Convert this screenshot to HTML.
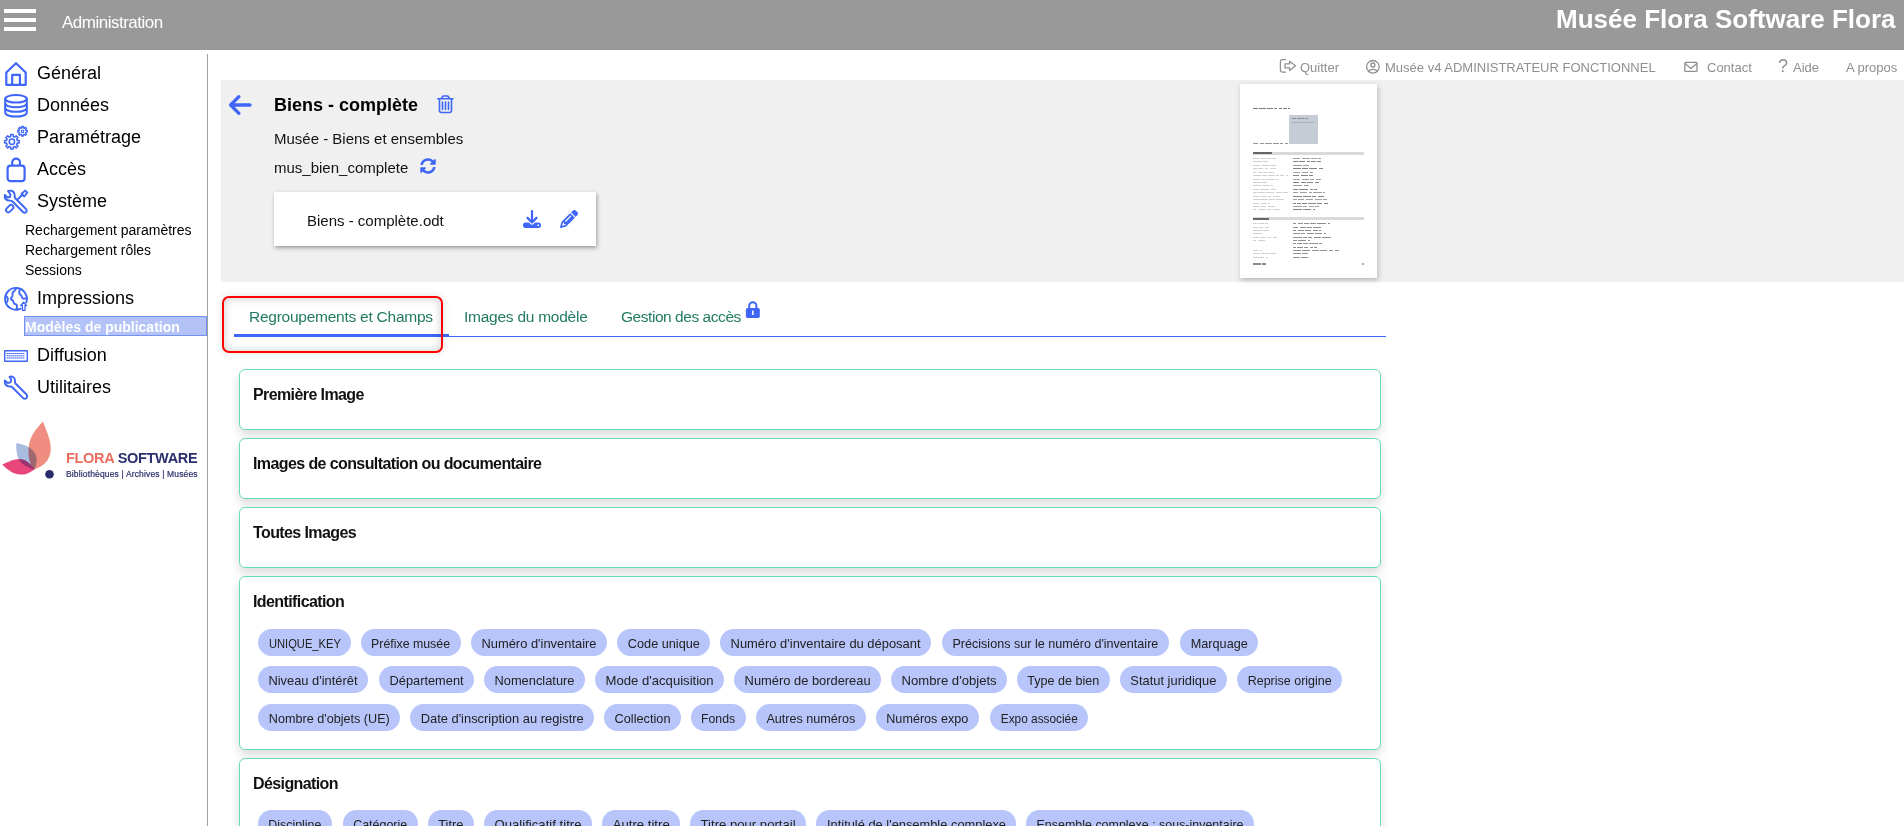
<!DOCTYPE html>
<html><head><meta charset="utf-8">
<style>
*{box-sizing:border-box;margin:0;padding:0}
html,body{width:1904px;height:826px;overflow:hidden;background:#fff;font-family:"Liberation Sans",sans-serif;position:relative}
.abs{position:absolute}
#hdr{left:0;top:0;width:1904px;height:50px;background:#999999}
.hb{position:absolute;left:4px;width:32px;height:4px;background:#fff}
#admin{left:62px;top:13px;font-size:17px;letter-spacing:-0.5px;color:#fff;white-space:nowrap}
#brand{left:1556px;top:4px;font-size:26px;font-weight:bold;color:#fff;white-space:nowrap}
#vline{left:207px;top:54px;width:1px;height:772px;background:#a0a0a0}
.nav{position:absolute;left:37px;font-size:18px;color:#000;white-space:nowrap}
.sub{position:absolute;left:25px;font-size:14px;color:#000;white-space:nowrap}
.tn{position:absolute;top:60px;font-size:13px;color:#8f8f8f;white-space:nowrap}
#grey{left:221px;top:80px;width:1683px;height:202px;background:#f0f0f0}
.t{position:absolute;white-space:nowrap;color:#000}
.panel{position:absolute;left:239px;width:1142px;border:1.5px solid #6adabe;border-radius:6px;background:#fff;box-shadow:0 5px 10px rgba(0,0,0,0.14)}
.panel h3{position:absolute;left:13px;font-size:16px;letter-spacing:-0.6px;font-weight:bold;color:#111;white-space:nowrap}
.chip{position:absolute;height:27px;border-radius:14px;background:#b7c5fa;color:#222;font-size:13px;line-height:29px;text-align:center;white-space:nowrap}
.chip span{display:inline-block;transform-origin:center}
.tab{position:absolute;top:307.5px;font-size:15.5px;letter-spacing:-0.25px;color:#227a62;white-space:nowrap}
</style></head><body>
<div id="hdr" class="abs">
  <div class="hb" style="top:9px"></div>
  <div class="hb" style="top:18px"></div>
  <div class="hb" style="top:27px"></div>
  <div id="admin" class="abs">Administration</div>
  <div id="brand" class="abs">Musée Flora Software Flora</div>
</div>
<div id="vline" class="abs"></div>

<!-- sidebar icons -->
<svg class="abs" style="left:0;top:0" width="208" height="410" viewBox="0 0 208 410" fill="none" stroke="#3f66f6" stroke-linejoin="round" stroke-linecap="round">
  <!-- house -->
  <path d="M6.3 84.8 V72.5 L16 63.2 L25.7 72.5 V84.8 Z" stroke-width="2.2"/>
  <path d="M12.2 84.8 V74.9 H19.9 V84.8" stroke-width="2.2"/>
  <!-- database -->
  <g stroke-width="2">
    <ellipse cx="16" cy="98.8" rx="10.8" ry="3.8"/>
    <path d="M5.2 98.8 V112.8 A10.8 3.8 0 0 0 26.8 112.8 V98.8"/>
    <path d="M5.2 103.4 A10.8 3.8 0 0 0 26.8 103.4"/>
    <path d="M5.2 108 A10.8 3.8 0 0 0 26.8 108"/>
  </g>
  <!-- gears -->
  <path d="M10.60 136.46 L10.60 134.52 L13.20 134.52 L13.20 136.46 L14.76 137.10 L16.13 135.73 L17.97 137.57 L16.60 138.94 L17.24 140.50 L19.18 140.50 L19.18 143.10 L17.24 143.10 L16.60 144.66 L17.97 146.03 L16.13 147.87 L14.76 146.50 L13.20 147.14 L13.20 149.08 L10.60 149.08 L10.60 147.14 L9.04 146.50 L7.67 147.87 L5.83 146.03 L7.20 144.66 L6.56 143.10 L4.62 143.10 L4.62 140.50 L6.56 140.50 L7.20 138.94 L5.83 137.57 L7.67 135.73 L9.04 137.10 Z" stroke-width="1.5"/><circle cx="11.9" cy="141.8" r="2.7" stroke-width="1.5"/><path d="M21.67 127.90 L21.64 126.48 L23.36 126.48 L23.33 127.90 L24.32 128.31 L25.30 127.28 L26.52 128.50 L25.49 129.48 L25.90 130.47 L27.32 130.44 L27.32 132.16 L25.90 132.13 L25.49 133.12 L26.52 134.10 L25.30 135.32 L24.32 134.29 L23.33 134.70 L23.36 136.12 L21.64 136.12 L21.67 134.70 L20.68 134.29 L19.70 135.32 L18.48 134.10 L19.51 133.12 L19.10 132.13 L17.68 132.16 L17.68 130.44 L19.10 130.47 L19.51 129.48 L18.48 128.50 L19.70 127.28 L20.68 128.31 Z" stroke-width="1.3"/><circle cx="22.5" cy="131.3" r="1.3" stroke-width="1.1"/>
  <!-- lock -->
  <path d="M12.2 165 V162.5 A3.9 3.9 0 0 1 20 162.5 V165" stroke-width="2.2"/>
  <rect x="7.6" y="165.6" width="17" height="15.6" rx="3" stroke-width="2.2"/>
  <!-- tools -->
  <g stroke-width="1.9">
    <path d="M8 191 C11 190 14 191 14.5 194 C15 196 14.5 197 15 198 L26 209 C27.5 210.5 26.5 212.8 24.6 212.8 C24 212.8 23.5 212.5 23 212 L12 201 C11 200.3 10 200.8 8.5 200.5 C5.5 200 4.5 197.5 4.8 195 L7.5 197.5 L10 197 L10.5 194.5 Z"/>
    <path d="M18 199 L22.5 194.5 M21.5 193.8 L25.2 190.6 L27.3 192.7 L24.2 196.5 Z"/>
    <rect x="5.45" y="206.3" width="8.5" height="4.6" rx="2.3" transform="rotate(-45 9.7 208.6)"/>
  </g>
  <!-- globe -->
  <g stroke-width="1.9">
    <path d="M20.6 308.7 A10.9 10.9 0 1 1 26.24 302.5"/>
    <path d="M15.8 289 C15.5 291 12.5 291 12.5 293.5 C12.5 295.5 13.5 296.5 11 298 C10.5 299.5 12 300 13 300.5 C13.5 302 13.2 303.5 15 304 C17 304.5 17.5 306 16.8 307.5 L16.5 309.6 M19.8 289.6 C19 291.5 19.2 294 20.8 295 C22 296 21.5 298 23 298.6 C24.5 299 25.8 298 26.8 298 M5.6 296.5 C7 296.6 8 297.5 7.8 299.5 C7.6 301.5 6.8 302.5 6.2 303"/>
    <path d="M23.6 302.3 L20.8 305.5 H22.4 V310.4 H25 V305.5 H26.5 Z" stroke-width="1.3"/>
  </g>
  <!-- keyboard -->
  <g stroke-width="1.4">
    <rect x="4.7" y="350.7" width="22.6" height="10.6"/>
    <path d="M7 353.5 H25 M7 355.8 H25 M7 358 H25" stroke-dasharray="1 1" stroke-width="1"/>
  </g>
  <!-- wrench -->
  <path d="M9.5 376.8 C12.5 376 15 377.5 15 380.5 C15 381.8 14.6 382.5 15.5 383.5 L26.5 394.5 C28 396 27 398.8 24.8 398.8 C24.2 398.8 23.7 398.6 23.2 398.1 L12 387 C11.2 386.3 10.3 386.6 8.8 386.4 C6 386 4.5 383.5 4.8 380.5 L7.7 383 L10.5 382.4 L11.2 379.5 Z" stroke-width="1.9"/>
</svg>

<!-- sidebar -->
<div class="nav" style="top:63px">Général</div>
<div class="nav" style="top:95px">Données</div>
<div class="nav" style="top:127px">Paramétrage</div>
<div class="nav" style="top:159px">Accès</div>
<div class="nav" style="top:191px">Système</div>
<div class="sub" style="top:222px">Rechargement paramètres</div>
<div class="sub" style="top:242px">Rechargement rôles</div>
<div class="sub" style="top:262px">Sessions</div>
<div class="nav" style="top:288px">Impressions</div>
<div class="abs" style="left:24px;top:316px;width:183px;height:20px;background:#b3c3f8;border:1px solid #7492f2"></div>
<div class="sub" style="top:319px;color:#fff;font-weight:bold">Modèles de publication</div>
<div class="nav" style="top:345px">Diffusion</div>
<div class="nav" style="top:377px">Utilitaires</div>

<!-- logo -->
<svg class="abs" style="left:0;top:415px" width="60" height="70" viewBox="0 415 60 70">
  <path d="M43 421.5 C36 429 29 437 28.5 449 C28 458 30 465 34.5 469.5 C44 466 50.5 460 50.8 449 C51 440 46 430 43 421.5 Z" fill="#ef8e80"/>
  <path d="M16.3 443.1 C16 452 17 460 24 465 C28 467.5 31 468.5 34.5 469.4 C37.5 463 37.5 456 33.5 451 C29 446 22 444.5 16.3 443.1 Z" fill="#aabbe0" style="mix-blend-mode:multiply"/>
  <path d="M2.3 464.4 C8 462 14 459 19 459 C26 459 31 464 34.5 469.4 C29 473 25 474.8 21 474.6 C12 474 7 469 2.3 464.4 Z" fill="#e8457a" style="mix-blend-mode:multiply"/>
  <circle cx="49.5" cy="474.2" r="4.3" fill="#2b2c6c"/>
</svg>
<div class="abs" style="left:66px;top:450px;font-size:14.5px;font-weight:bold;white-space:nowrap;letter-spacing:-0.3px"><span style="color:#ec6e61">FLORA</span> <span style="color:#2b2f6e">SOFTWARE</span></div>
<div class="abs" style="left:66px;top:469px;font-size:8.5px;letter-spacing:0.15px;color:#2b2e6a;-webkit-text-stroke:0.2px #2b2e6a;white-space:nowrap">Bibliothèques | Archives | Musées</div>

<!-- top nav -->
<svg class="abs" style="left:1270px;top:52px" width="440" height="28" viewBox="1270 52 440 28" fill="none" stroke="#8f8f8f" stroke-width="1.3" stroke-linejoin="round" stroke-linecap="round">
  <path d="M1285.6 59.6 H1282.2 A1.8 1.8 0 0 0 1280.4 61.4 V70.3 A1.8 1.8 0 0 0 1282.2 72.1 H1285.6"/>
  <path d="M1285 63.8 H1289.6 V61.2 L1295.5 65.8 L1289.6 70.4 V67.9 H1285 Z"/>
  <circle cx="1372.9" cy="66.8" r="6.3"/>
  <circle cx="1372.9" cy="65" r="2"/>
  <path d="M1368.6 71.6 C1369.2 69.8 1370.2 69.3 1372.9 69.3 C1375.6 69.3 1376.6 69.8 1377.2 71.6"/>
  <rect x="1684.8" y="62.4" width="12.2" height="9" rx="1"/>
  <path d="M1685 63.6 L1690.9 68.6 L1696.8 63.6"/>
</svg>
<div class="tn" style="left:1300px">Quitter</div>
<div class="tn" style="left:1385px">Musée v4 ADMINISTRATEUR FONCTIONNEL</div>
<div class="tn" style="left:1707px">Contact</div>
<div class="tn" style="left:1778px;font-size:18px;top:56px">?</div>
<div class="tn" style="left:1793px">Aide</div>
<div class="tn" style="left:1846px">A propos</div>

<div id="grey" class="abs"></div>
<svg class="abs" style="left:220px;top:85px" width="240" height="100" viewBox="220 85 240 100" fill="none" stroke="#4066f7" stroke-linecap="round" stroke-linejoin="round">
  <path d="M238.9 96.7 L230.6 105 L238.9 113.3 M230.8 105 H250" stroke-width="3.3"/>
  <path d="M437.8 98.8 H453 M441.5 98.5 L443 96 H447.8 L449.3 98.5 M439.5 99 V110.5 A2 2 0 0 0 441.5 112.5 H449.5 A2 2 0 0 0 451.5 110.5 V99 M442.5 102 V109.5 M445.5 102 V109.5 M448.5 102 V109.5" stroke-width="1.6"/>
</svg>
<div class="t" style="left:274px;top:95px;font-size:18px;font-weight:bold">Biens - complète</div>
<div class="t" style="left:274px;top:130px;font-size:15px;color:#111">Musée - Biens et ensembles</div>
<div class="t" style="left:274px;top:159px;font-size:15px;color:#111">mus_bien_complete</div>
<svg class="abs" style="left:420px;top:158px" width="16" height="16" viewBox="0 0 512 512"><path fill="#4066f7" d="M370.72 133.28C339.458 104.008 298.888 87.962 255.848 88c-77.458.068-144.328 53.178-162.791 126.85-1.344 5.363-6.122 9.15-11.651 9.15H24.103c-7.498 0-13.194-6.807-11.807-14.176C33.933 94.924 134.813 8 256 8c66.448 0 126.791 26.136 171.315 68.685L463.03 40.97C478.149 25.851 504 36.559 504 57.941V192c0 13.255-10.745 24-24 24H345.941c-21.382 0-32.090-25.851-16.971-40.971l41.750-41.749zM32 296h134.059c21.382 0 32.090 25.851 16.971 40.971l-41.750 41.750c31.262 29.273 71.835 45.319 114.876 45.280 77.418-.07 144.315-53.144 162.787-126.849 1.344-5.363 6.122-9.150 11.651-9.150h57.304c7.498 0 13.194 6.807 11.807 14.176C478.067 417.076 377.187 504 256 504c-66.448 0-126.791-26.136-171.315-68.685L48.970 471.030C33.851 486.149 8 475.441 8 454.059V320c0-13.255 10.745-24 24-24z"/></svg>
<div class="abs" style="left:274px;top:192px;width:322px;height:54px;background:#fff;box-shadow:1px 2px 4px rgba(0,0,0,0.35)"></div>
<div class="t" style="left:307px;top:212px;font-size:15px;color:#111">Biens - complète.odt</div>
<svg class="abs" style="left:523px;top:210px" width="18" height="18" viewBox="0 0 512 512"><path fill="#4066f7" d="M288 32c0-17.700-14.300-32-32-32s-32 14.300-32 32V274.700l-73.400-73.400c-12.500-12.500-32.800-12.500-45.300 0s-12.500 32.800 0 45.300l128 128c12.500 12.500 32.800 12.500 45.300 0l128-128c12.500-12.500 12.500-32.800 0-45.300s-32.800-12.500-45.300 0L288 274.700V32zM64 352c-35.300 0-64 28.700-64 64v32c0 35.300 28.700 64 64 64H448c35.300 0 64-28.700 64-64V416c0-35.300-28.700-64-64-64H346.500l-45.300 45.300c-25 25-65.500 25-90.500 0L165.500 352H64zm368 56a24 24 0 1 1 0 48 24 24 0 1 1 0-48z"/></svg>
<svg class="abs" style="left:560px;top:210px" width="18" height="18" viewBox="0 0 512 512"><path fill="#4066f7" d="M410.300 231l11.300-11.300-33.900-33.900-62.100-62.100L291.700 89.800l-11.300 11.300-22.600 22.600L58.600 322.900c-10.400 10.400-18 23.300-22.200 37.400L1 480.700c-2.500 8.400-.2 17.500 6.100 23.700s15.300 8.500 23.700 6.100l120.300-35.400c14.100-4.200 27-11.800 37.400-22.200L387.700 253.700 410.300 231zM160 399.400l-9.100 22.700c-4 3.100-8.500 5.400-13.300 6.900L59.400 452l23-78.100c1.400-4.900 3.800-9.400 6.900-13.300l22.700-9.100v32c0 8.800 7.200 16 16 16h32zM362.700 18.700L348.300 33.200 325.700 55.800 314.300 67.100l33.900 33.900 62.100 62.100 33.900 33.900 11.300-11.300 22.600-22.600 14.500-14.500c25-25 25-65.500 0-90.500L453.300 18.700c-25-25-65.500-25-90.500 0zm-47.400 168l-144 144c-6.200 6.200-16.400 6.200-22.600 0s-6.200-16.400 0-22.600l144-144c6.200-6.200 16.400-6.200 22.600 0s6.200 16.400 0 22.600z"/></svg>
<div class="abs" style="left:1240px;top:84px;width:137px;height:194px;background:#fff;box-shadow:1px 2px 5px rgba(0,0,0,0.25)"></div>
<div class="abs" style="left:1253.0px;top:107.8px;width:4.9px;height:1.4px;background:#7a7a7a"></div>
<div class="abs" style="left:1258.9px;top:107.8px;width:6.9px;height:1.4px;background:#7a7a7a"></div>
<div class="abs" style="left:1266.7px;top:107.8px;width:6.2px;height:1.4px;background:#7a7a7a"></div>
<div class="abs" style="left:1274.1px;top:107.8px;width:3.3px;height:1.4px;background:#7a7a7a"></div>
<div class="abs" style="left:1278.7px;top:107.8px;width:3.2px;height:1.4px;background:#7a7a7a"></div>
<div class="abs" style="left:1283.2px;top:107.8px;width:3.4px;height:1.4px;background:#7a7a7a"></div>
<div class="abs" style="left:1287.5px;top:107.8px;width:2.5px;height:1.4px;background:#7a7a7a"></div>
<div class="abs" style="left:1289.0px;top:115.0px;width:29.0px;height:29px;background:#c6ccd6"></div>
<div class="abs" style="left:1292.0px;top:118.3px;width:3.7px;height:0.9px;background:#8a90a0"></div>
<div class="abs" style="left:1296.8px;top:118.3px;width:6.8px;height:0.9px;background:#8a90a0"></div>
<div class="abs" style="left:1305.3px;top:118.3px;width:2.7px;height:0.9px;background:#8a90a0"></div>
<div class="abs" style="left:1292.0px;top:121.5px;width:8.9px;height:0.7px;background:#a6acb8"></div>
<div class="abs" style="left:1301.7px;top:121.5px;width:8.2px;height:0.7px;background:#a6acb8"></div>
<div class="abs" style="left:1310.9px;top:121.5px;width:3.1px;height:0.7px;background:#a6acb8"></div>
<div class="abs" style="left:1253.0px;top:142.8px;width:4.9px;height:1.1px;background:#999"></div>
<div class="abs" style="left:1259.5px;top:142.8px;width:4.1px;height:1.1px;background:#999"></div>
<div class="abs" style="left:1264.9px;top:142.8px;width:6.8px;height:1.1px;background:#999"></div>
<div class="abs" style="left:1272.9px;top:142.8px;width:6.3px;height:1.1px;background:#999"></div>
<div class="abs" style="left:1280.1px;top:142.8px;width:3.4px;height:1.1px;background:#999"></div>
<div class="abs" style="left:1284.5px;top:142.8px;width:3.5px;height:1.1px;background:#999"></div>
<div class="abs" style="left:1253.0px;top:151.5px;width:111.0px;height:3.3px;background:#d9d9d9"></div>
<div class="abs" style="left:1253.0px;top:152.0px;width:19.0px;height:2.2px;background:#666"></div>
<div class="abs" style="left:1253.0px;top:158.0px;width:5.8px;height:0.9px;background:#d0d0d0"></div>
<div class="abs" style="left:1260.5px;top:158.0px;width:5.2px;height:0.9px;background:#d0d0d0"></div>
<div class="abs" style="left:1266.7px;top:158.0px;width:4.1px;height:0.9px;background:#d0d0d0"></div>
<div class="abs" style="left:1272.4px;top:158.0px;width:3.5px;height:0.9px;background:#d0d0d0"></div>
<div class="abs" style="left:1293.0px;top:158.0px;width:7.4px;height:1.0px;background:#a0a0a0"></div>
<div class="abs" style="left:1301.5px;top:158.0px;width:8.9px;height:1.0px;background:#a0a0a0"></div>
<div class="abs" style="left:1311.3px;top:158.0px;width:5.5px;height:1.0px;background:#a0a0a0"></div>
<div class="abs" style="left:1318.3px;top:158.0px;width:2.7px;height:1.0px;background:#a0a0a0"></div>
<div class="abs" style="left:1253.0px;top:161.4px;width:8.8px;height:0.9px;background:#d0d0d0"></div>
<div class="abs" style="left:1262.6px;top:161.4px;width:5.4px;height:0.9px;background:#d0d0d0"></div>
<div class="abs" style="left:1293.0px;top:161.4px;width:5.0px;height:1.0px;background:#858585"></div>
<div class="abs" style="left:1299.2px;top:161.4px;width:6.0px;height:1.0px;background:#858585"></div>
<div class="abs" style="left:1306.8px;top:161.4px;width:3.4px;height:1.0px;background:#858585"></div>
<div class="abs" style="left:1311.1px;top:161.4px;width:4.6px;height:1.0px;background:#858585"></div>
<div class="abs" style="left:1317.2px;top:161.4px;width:3.4px;height:1.0px;background:#858585"></div>
<div class="abs" style="left:1253.0px;top:164.8px;width:6.9px;height:0.9px;background:#d0d0d0"></div>
<div class="abs" style="left:1261.7px;top:164.8px;width:7.9px;height:0.9px;background:#d0d0d0"></div>
<div class="abs" style="left:1270.7px;top:164.8px;width:5.3px;height:0.9px;background:#d0d0d0"></div>
<div class="abs" style="left:1293.0px;top:164.8px;width:8.6px;height:1.0px;background:#a0a0a0"></div>
<div class="abs" style="left:1302.8px;top:164.8px;width:6.7px;height:1.0px;background:#a0a0a0"></div>
<div class="abs" style="left:1253.0px;top:168.3px;width:3.8px;height:0.9px;background:#d0d0d0"></div>
<div class="abs" style="left:1257.8px;top:168.3px;width:5.3px;height:0.9px;background:#d0d0d0"></div>
<div class="abs" style="left:1264.8px;top:168.3px;width:3.5px;height:0.9px;background:#d0d0d0"></div>
<div class="abs" style="left:1269.6px;top:168.3px;width:6.3px;height:0.9px;background:#d0d0d0"></div>
<div class="abs" style="left:1293.0px;top:168.3px;width:8.2px;height:1.0px;background:#858585"></div>
<div class="abs" style="left:1302.3px;top:168.3px;width:5.5px;height:1.0px;background:#858585"></div>
<div class="abs" style="left:1308.9px;top:168.3px;width:8.3px;height:1.0px;background:#858585"></div>
<div class="abs" style="left:1319.0px;top:168.3px;width:3.9px;height:1.0px;background:#858585"></div>
<div class="abs" style="left:1253.0px;top:171.7px;width:3.1px;height:0.9px;background:#d0d0d0"></div>
<div class="abs" style="left:1257.7px;top:171.7px;width:4.1px;height:0.9px;background:#d0d0d0"></div>
<div class="abs" style="left:1262.9px;top:171.7px;width:3.9px;height:0.9px;background:#d0d0d0"></div>
<div class="abs" style="left:1268.1px;top:171.7px;width:5.9px;height:0.9px;background:#d0d0d0"></div>
<div class="abs" style="left:1293.0px;top:171.7px;width:7.1px;height:1.0px;background:#a0a0a0"></div>
<div class="abs" style="left:1301.5px;top:171.7px;width:6.7px;height:1.0px;background:#a0a0a0"></div>
<div class="abs" style="left:1309.6px;top:171.7px;width:3.3px;height:1.0px;background:#a0a0a0"></div>
<div class="abs" style="left:1253.0px;top:175.1px;width:7.8px;height:0.9px;background:#d0d0d0"></div>
<div class="abs" style="left:1262.0px;top:175.1px;width:5.4px;height:0.9px;background:#d0d0d0"></div>
<div class="abs" style="left:1268.3px;top:175.1px;width:6.8px;height:0.9px;background:#d0d0d0"></div>
<div class="abs" style="left:1275.9px;top:175.1px;width:3.4px;height:0.9px;background:#d0d0d0"></div>
<div class="abs" style="left:1280.4px;top:175.1px;width:4.0px;height:0.9px;background:#d0d0d0"></div>
<div class="abs" style="left:1285.5px;top:175.1px;width:2.5px;height:0.9px;background:#d0d0d0"></div>
<div class="abs" style="left:1293.0px;top:175.1px;width:6.2px;height:1.0px;background:#858585"></div>
<div class="abs" style="left:1301.0px;top:175.1px;width:6.7px;height:1.0px;background:#858585"></div>
<div class="abs" style="left:1308.5px;top:175.1px;width:4.2px;height:1.0px;background:#858585"></div>
<div class="abs" style="left:1253.0px;top:178.5px;width:6.6px;height:0.9px;background:#d0d0d0"></div>
<div class="abs" style="left:1260.9px;top:178.5px;width:3.7px;height:0.9px;background:#d0d0d0"></div>
<div class="abs" style="left:1265.9px;top:178.5px;width:8.9px;height:0.9px;background:#d0d0d0"></div>
<div class="abs" style="left:1276.0px;top:178.5px;width:2.0px;height:0.9px;background:#d0d0d0"></div>
<div class="abs" style="left:1293.0px;top:178.5px;width:7.4px;height:1.0px;background:#a0a0a0"></div>
<div class="abs" style="left:1301.7px;top:178.5px;width:7.2px;height:1.0px;background:#a0a0a0"></div>
<div class="abs" style="left:1310.2px;top:178.5px;width:4.2px;height:1.0px;background:#a0a0a0"></div>
<div class="abs" style="left:1316.2px;top:178.5px;width:4.8px;height:1.0px;background:#a0a0a0"></div>
<div class="abs" style="left:1253.0px;top:181.9px;width:7.5px;height:0.9px;background:#d0d0d0"></div>
<div class="abs" style="left:1261.6px;top:181.9px;width:5.4px;height:0.9px;background:#d0d0d0"></div>
<div class="abs" style="left:1293.0px;top:181.9px;width:6.1px;height:1.0px;background:#858585"></div>
<div class="abs" style="left:1300.8px;top:181.9px;width:5.1px;height:1.0px;background:#858585"></div>
<div class="abs" style="left:1307.0px;top:181.9px;width:6.2px;height:1.0px;background:#858585"></div>
<div class="abs" style="left:1314.5px;top:181.9px;width:4.5px;height:1.0px;background:#858585"></div>
<div class="abs" style="left:1253.0px;top:185.4px;width:7.8px;height:0.9px;background:#d0d0d0"></div>
<div class="abs" style="left:1262.5px;top:185.4px;width:7.4px;height:0.9px;background:#d0d0d0"></div>
<div class="abs" style="left:1270.9px;top:185.4px;width:2.1px;height:0.9px;background:#d0d0d0"></div>
<div class="abs" style="left:1293.0px;top:185.4px;width:8.9px;height:1.0px;background:#a0a0a0"></div>
<div class="abs" style="left:1303.5px;top:185.4px;width:5.8px;height:1.0px;background:#a0a0a0"></div>
<div class="abs" style="left:1253.0px;top:188.8px;width:5.7px;height:0.9px;background:#d0d0d0"></div>
<div class="abs" style="left:1260.4px;top:188.8px;width:8.9px;height:0.9px;background:#d0d0d0"></div>
<div class="abs" style="left:1271.1px;top:188.8px;width:5.2px;height:0.9px;background:#d0d0d0"></div>
<div class="abs" style="left:1293.0px;top:188.8px;width:5.0px;height:1.0px;background:#858585"></div>
<div class="abs" style="left:1299.3px;top:188.8px;width:8.9px;height:1.0px;background:#858585"></div>
<div class="abs" style="left:1309.6px;top:188.8px;width:3.0px;height:1.0px;background:#858585"></div>
<div class="abs" style="left:1314.4px;top:188.8px;width:2.6px;height:1.0px;background:#858585"></div>
<div class="abs" style="left:1253.0px;top:192.2px;width:3.7px;height:0.9px;background:#d0d0d0"></div>
<div class="abs" style="left:1257.9px;top:192.2px;width:7.3px;height:0.9px;background:#d0d0d0"></div>
<div class="abs" style="left:1266.2px;top:192.2px;width:8.3px;height:0.9px;background:#d0d0d0"></div>
<div class="abs" style="left:1275.7px;top:192.2px;width:6.8px;height:0.9px;background:#d0d0d0"></div>
<div class="abs" style="left:1283.4px;top:192.2px;width:4.6px;height:0.9px;background:#d0d0d0"></div>
<div class="abs" style="left:1293.0px;top:192.2px;width:5.4px;height:1.0px;background:#a0a0a0"></div>
<div class="abs" style="left:1300.2px;top:192.2px;width:7.3px;height:1.0px;background:#a0a0a0"></div>
<div class="abs" style="left:1308.5px;top:192.2px;width:3.8px;height:1.0px;background:#a0a0a0"></div>
<div class="abs" style="left:1313.2px;top:192.2px;width:8.4px;height:1.0px;background:#a0a0a0"></div>
<div class="abs" style="left:1323.2px;top:192.2px;width:1.8px;height:1.0px;background:#a0a0a0"></div>
<div class="abs" style="left:1253.0px;top:195.6px;width:6.9px;height:0.9px;background:#d0d0d0"></div>
<div class="abs" style="left:1261.1px;top:195.6px;width:6.3px;height:0.9px;background:#d0d0d0"></div>
<div class="abs" style="left:1268.3px;top:195.6px;width:3.1px;height:0.9px;background:#d0d0d0"></div>
<div class="abs" style="left:1273.2px;top:195.6px;width:6.9px;height:0.9px;background:#d0d0d0"></div>
<div class="abs" style="left:1293.0px;top:195.6px;width:8.9px;height:1.0px;background:#858585"></div>
<div class="abs" style="left:1302.9px;top:195.6px;width:8.2px;height:1.0px;background:#858585"></div>
<div class="abs" style="left:1312.0px;top:195.6px;width:4.3px;height:1.0px;background:#858585"></div>
<div class="abs" style="left:1317.6px;top:195.6px;width:6.4px;height:1.0px;background:#858585"></div>
<div class="abs" style="left:1253.0px;top:199.0px;width:5.5px;height:0.9px;background:#d0d0d0"></div>
<div class="abs" style="left:1259.4px;top:199.0px;width:8.5px;height:0.9px;background:#d0d0d0"></div>
<div class="abs" style="left:1269.1px;top:199.0px;width:5.7px;height:0.9px;background:#d0d0d0"></div>
<div class="abs" style="left:1276.2px;top:199.0px;width:7.8px;height:0.9px;background:#d0d0d0"></div>
<div class="abs" style="left:1293.0px;top:199.0px;width:3.8px;height:1.0px;background:#a0a0a0"></div>
<div class="abs" style="left:1297.7px;top:199.0px;width:6.1px;height:1.0px;background:#a0a0a0"></div>
<div class="abs" style="left:1305.5px;top:199.0px;width:7.7px;height:1.0px;background:#a0a0a0"></div>
<div class="abs" style="left:1314.5px;top:199.0px;width:7.7px;height:1.0px;background:#a0a0a0"></div>
<div class="abs" style="left:1323.1px;top:199.0px;width:3.8px;height:1.0px;background:#a0a0a0"></div>
<div class="abs" style="left:1253.0px;top:202.5px;width:6.3px;height:0.9px;background:#d0d0d0"></div>
<div class="abs" style="left:1260.5px;top:202.5px;width:6.1px;height:0.9px;background:#d0d0d0"></div>
<div class="abs" style="left:1267.9px;top:202.5px;width:2.1px;height:0.9px;background:#d0d0d0"></div>
<div class="abs" style="left:1293.0px;top:202.5px;width:3.3px;height:1.0px;background:#858585"></div>
<div class="abs" style="left:1297.3px;top:202.5px;width:3.3px;height:1.0px;background:#858585"></div>
<div class="abs" style="left:1301.5px;top:202.5px;width:5.7px;height:1.0px;background:#858585"></div>
<div class="abs" style="left:1308.0px;top:202.5px;width:8.4px;height:1.0px;background:#858585"></div>
<div class="abs" style="left:1317.3px;top:202.5px;width:5.0px;height:1.0px;background:#858585"></div>
<div class="abs" style="left:1324.0px;top:202.5px;width:4.0px;height:1.0px;background:#858585"></div>
<div class="abs" style="left:1253.0px;top:205.9px;width:5.7px;height:0.9px;background:#d0d0d0"></div>
<div class="abs" style="left:1260.0px;top:205.9px;width:5.9px;height:0.9px;background:#d0d0d0"></div>
<div class="abs" style="left:1267.7px;top:205.9px;width:7.2px;height:0.9px;background:#d0d0d0"></div>
<div class="abs" style="left:1293.0px;top:205.9px;width:8.5px;height:1.0px;background:#a0a0a0"></div>
<div class="abs" style="left:1303.2px;top:205.9px;width:4.2px;height:1.0px;background:#a0a0a0"></div>
<div class="abs" style="left:1308.7px;top:205.9px;width:5.5px;height:1.0px;background:#a0a0a0"></div>
<div class="abs" style="left:1315.4px;top:205.9px;width:3.6px;height:1.0px;background:#a0a0a0"></div>
<div class="abs" style="left:1253.0px;top:209.3px;width:3.4px;height:0.9px;background:#d0d0d0"></div>
<div class="abs" style="left:1257.9px;top:209.3px;width:7.7px;height:0.9px;background:#d0d0d0"></div>
<div class="abs" style="left:1267.3px;top:209.3px;width:3.9px;height:0.9px;background:#d0d0d0"></div>
<div class="abs" style="left:1272.8px;top:209.3px;width:7.0px;height:0.9px;background:#d0d0d0"></div>
<div class="abs" style="left:1293.0px;top:209.3px;width:8.8px;height:1.0px;background:#858585"></div>
<div class="abs" style="left:1302.8px;top:209.3px;width:8.7px;height:1.0px;background:#858585"></div>
<div class="abs" style="left:1312.7px;top:209.3px;width:2.3px;height:1.0px;background:#858585"></div>
<div class="abs" style="left:1253.0px;top:217.0px;width:111.0px;height:3.3px;background:#d9d9d9"></div>
<div class="abs" style="left:1253.0px;top:217.5px;width:16.0px;height:2.2px;background:#666"></div>
<div class="abs" style="left:1253.0px;top:223.3px;width:4.0px;height:0.9px;background:#d0d0d0"></div>
<div class="abs" style="left:1258.2px;top:223.3px;width:6.1px;height:0.9px;background:#d0d0d0"></div>
<div class="abs" style="left:1265.4px;top:223.3px;width:2.6px;height:0.9px;background:#d0d0d0"></div>
<div class="abs" style="left:1293.0px;top:223.3px;width:3.1px;height:1.0px;background:#8f8f8f"></div>
<div class="abs" style="left:1297.5px;top:223.3px;width:5.6px;height:1.0px;background:#8f8f8f"></div>
<div class="abs" style="left:1303.9px;top:223.3px;width:5.0px;height:1.0px;background:#8f8f8f"></div>
<div class="abs" style="left:1310.3px;top:223.3px;width:6.1px;height:1.0px;background:#8f8f8f"></div>
<div class="abs" style="left:1317.3px;top:223.3px;width:8.9px;height:1.0px;background:#8f8f8f"></div>
<div class="abs" style="left:1327.8px;top:223.3px;width:2.2px;height:1.0px;background:#8f8f8f"></div>
<div class="abs" style="left:1253.0px;top:226.7px;width:4.6px;height:0.9px;background:#d0d0d0"></div>
<div class="abs" style="left:1259.3px;top:226.7px;width:4.1px;height:0.9px;background:#d0d0d0"></div>
<div class="abs" style="left:1265.0px;top:226.7px;width:4.0px;height:0.9px;background:#d0d0d0"></div>
<div class="abs" style="left:1293.0px;top:226.7px;width:5.4px;height:1.0px;background:#8f8f8f"></div>
<div class="abs" style="left:1299.8px;top:226.7px;width:6.1px;height:1.0px;background:#8f8f8f"></div>
<div class="abs" style="left:1307.2px;top:226.7px;width:5.0px;height:1.0px;background:#8f8f8f"></div>
<div class="abs" style="left:1313.2px;top:226.7px;width:7.8px;height:1.0px;background:#8f8f8f"></div>
<div class="abs" style="left:1253.0px;top:230.0px;width:8.6px;height:0.9px;background:#d0d0d0"></div>
<div class="abs" style="left:1263.1px;top:230.0px;width:5.9px;height:0.9px;background:#d0d0d0"></div>
<div class="abs" style="left:1293.0px;top:230.0px;width:3.4px;height:1.0px;background:#8f8f8f"></div>
<div class="abs" style="left:1298.1px;top:230.0px;width:5.7px;height:1.0px;background:#8f8f8f"></div>
<div class="abs" style="left:1304.9px;top:230.0px;width:6.3px;height:1.0px;background:#8f8f8f"></div>
<div class="abs" style="left:1313.0px;top:230.0px;width:4.6px;height:1.0px;background:#8f8f8f"></div>
<div class="abs" style="left:1318.5px;top:230.0px;width:2.5px;height:1.0px;background:#8f8f8f"></div>
<div class="abs" style="left:1253.0px;top:233.3px;width:8.8px;height:0.9px;background:#d0d0d0"></div>
<div class="abs" style="left:1293.0px;top:233.3px;width:6.8px;height:1.0px;background:#8f8f8f"></div>
<div class="abs" style="left:1301.1px;top:233.3px;width:4.2px;height:1.0px;background:#8f8f8f"></div>
<div class="abs" style="left:1306.6px;top:233.3px;width:7.0px;height:1.0px;background:#8f8f8f"></div>
<div class="abs" style="left:1314.7px;top:233.3px;width:7.8px;height:1.0px;background:#8f8f8f"></div>
<div class="abs" style="left:1324.3px;top:233.3px;width:1.7px;height:1.0px;background:#8f8f8f"></div>
<div class="abs" style="left:1253.0px;top:236.7px;width:6.3px;height:0.9px;background:#d0d0d0"></div>
<div class="abs" style="left:1260.3px;top:236.7px;width:5.8px;height:0.9px;background:#d0d0d0"></div>
<div class="abs" style="left:1267.9px;top:236.7px;width:3.6px;height:0.9px;background:#d0d0d0"></div>
<div class="abs" style="left:1273.1px;top:236.7px;width:3.9px;height:0.9px;background:#d0d0d0"></div>
<div class="abs" style="left:1293.0px;top:236.7px;width:8.8px;height:1.0px;background:#8f8f8f"></div>
<div class="abs" style="left:1302.9px;top:236.7px;width:4.3px;height:1.0px;background:#8f8f8f"></div>
<div class="abs" style="left:1308.3px;top:236.7px;width:4.2px;height:1.0px;background:#8f8f8f"></div>
<div class="abs" style="left:1314.1px;top:236.7px;width:7.4px;height:1.0px;background:#8f8f8f"></div>
<div class="abs" style="left:1322.4px;top:236.7px;width:8.9px;height:1.0px;background:#8f8f8f"></div>
<div class="abs" style="left:1253.0px;top:240.0px;width:3.1px;height:0.9px;background:#d0d0d0"></div>
<div class="abs" style="left:1257.5px;top:240.0px;width:7.5px;height:0.9px;background:#d0d0d0"></div>
<div class="abs" style="left:1293.0px;top:240.0px;width:3.5px;height:1.0px;background:#8f8f8f"></div>
<div class="abs" style="left:1298.1px;top:240.0px;width:8.2px;height:1.0px;background:#8f8f8f"></div>
<div class="abs" style="left:1307.8px;top:240.0px;width:2.2px;height:1.0px;background:#8f8f8f"></div>
<div class="abs" style="left:1293.0px;top:243.4px;width:3.3px;height:1.0px;background:#8f8f8f"></div>
<div class="abs" style="left:1297.3px;top:243.4px;width:4.6px;height:1.0px;background:#8f8f8f"></div>
<div class="abs" style="left:1302.7px;top:243.4px;width:5.2px;height:1.0px;background:#8f8f8f"></div>
<div class="abs" style="left:1309.0px;top:243.4px;width:8.9px;height:1.0px;background:#8f8f8f"></div>
<div class="abs" style="left:1319.0px;top:243.4px;width:3.2px;height:1.0px;background:#8f8f8f"></div>
<div class="abs" style="left:1293.0px;top:246.7px;width:3.0px;height:1.0px;background:#8f8f8f"></div>
<div class="abs" style="left:1297.2px;top:246.7px;width:5.8px;height:1.0px;background:#8f8f8f"></div>
<div class="abs" style="left:1304.3px;top:246.7px;width:4.2px;height:1.0px;background:#8f8f8f"></div>
<div class="abs" style="left:1309.8px;top:246.7px;width:3.0px;height:1.0px;background:#8f8f8f"></div>
<div class="abs" style="left:1313.9px;top:246.7px;width:3.5px;height:1.0px;background:#8f8f8f"></div>
<div class="abs" style="left:1253.0px;top:250.1px;width:5.4px;height:0.9px;background:#d0d0d0"></div>
<div class="abs" style="left:1259.5px;top:250.1px;width:2.5px;height:0.9px;background:#d0d0d0"></div>
<div class="abs" style="left:1293.0px;top:250.1px;width:8.1px;height:1.0px;background:#8f8f8f"></div>
<div class="abs" style="left:1302.1px;top:250.1px;width:8.4px;height:1.0px;background:#8f8f8f"></div>
<div class="abs" style="left:1312.0px;top:250.1px;width:6.6px;height:1.0px;background:#8f8f8f"></div>
<div class="abs" style="left:1320.2px;top:250.1px;width:7.3px;height:1.0px;background:#8f8f8f"></div>
<div class="abs" style="left:1328.8px;top:250.1px;width:4.7px;height:1.0px;background:#8f8f8f"></div>
<div class="abs" style="left:1334.9px;top:250.1px;width:3.9px;height:1.0px;background:#8f8f8f"></div>
<div class="abs" style="left:1253.0px;top:253.4px;width:6.8px;height:0.9px;background:#d0d0d0"></div>
<div class="abs" style="left:1261.3px;top:253.4px;width:7.9px;height:0.9px;background:#d0d0d0"></div>
<div class="abs" style="left:1270.1px;top:253.4px;width:6.1px;height:0.9px;background:#d0d0d0"></div>
<div class="abs" style="left:1293.0px;top:253.4px;width:8.0px;height:1.0px;background:#8f8f8f"></div>
<div class="abs" style="left:1302.3px;top:253.4px;width:5.7px;height:1.0px;background:#8f8f8f"></div>
<div class="abs" style="left:1253.0px;top:256.8px;width:3.5px;height:0.9px;background:#d0d0d0"></div>
<div class="abs" style="left:1257.4px;top:256.8px;width:6.8px;height:0.9px;background:#d0d0d0"></div>
<div class="abs" style="left:1265.9px;top:256.8px;width:2.1px;height:0.9px;background:#d0d0d0"></div>
<div class="abs" style="left:1293.0px;top:256.8px;width:6.8px;height:1.0px;background:#8f8f8f"></div>
<div class="abs" style="left:1301.2px;top:256.8px;width:7.1px;height:1.0px;background:#8f8f8f"></div>
<div class="abs" style="left:1253.0px;top:263.2px;width:7.8px;height:1.4px;background:#888"></div>
<div class="abs" style="left:1262.3px;top:263.2px;width:3.7px;height:1.4px;background:#888"></div>
<div class="abs" style="left:1362.0px;top:263.0px;width:2.0px;height:1.5px;background:#aaa"></div>

<!-- tabs -->

<div class="tab" style="left:249px">Regroupements et Champs</div>
<div class="tab" style="left:464px">Images du modèle</div>
<div class="tab" style="left:621px;letter-spacing:-0.45px">Gestion des accès</div>
<svg class="abs" style="left:744px;top:300px" width="18" height="20" viewBox="744 300 18 20">
  <path d="M749.2 308 V305.8 A3.6 3.6 0 0 1 756.4 305.8 V308" stroke="#4066f7" stroke-width="2" fill="none"/>
  <rect x="745.9" y="308" width="13.9" height="9.9" rx="1.6" fill="#4066f7"/>
  <rect x="752.1" y="310.5" width="1.6" height="4.5" rx="0.5" fill="#fff"/>
</svg>
<div class="abs" style="left:234px;top:336px;width:1152px;height:1px;background:#3f66f6"></div>
<div class="abs" style="left:234px;top:334px;width:215px;height:3px;background:#3f66f6"></div>
<div class="abs" style="left:222px;top:296px;width:221px;height:57px;border:2px solid #ff0000;border-radius:7px;box-shadow:inset 0 0 10px rgba(0,0,0,0.2),0 0 8px rgba(0,0,0,0.12)"></div>

<!-- panels -->
<div class="panel" style="top:369px;height:61px"><h3 style="top:16px">Première Image</h3></div>
<div class="panel" style="top:438px;height:61px"><h3 style="top:16px">Images de consultation ou documentaire</h3></div>
<div class="panel" style="top:507px;height:61px"><h3 style="top:16px">Toutes Images</h3></div>
<div class="panel" style="top:576px;height:174px"><h3 style="top:16px">Identification</h3></div>
<div class="panel" style="top:758px;height:100px"><h3 style="top:16px">Désignation</h3></div>
<div class="chip" style="left:258px;top:629px;width:93px"><span style="transform:scaleX(0.859)">UNIQUE_KEY</span></div>
<div class="chip" style="left:361px;top:629px;width:100px"><span style="transform:scaleX(0.951)">Préfixe musée</span></div>
<div class="chip" style="left:471px;top:629px;width:136px"><span style="transform:scaleX(0.992)">Numéro d'inventaire</span></div>
<div class="chip" style="left:617px;top:629px;width:93px"><span style="transform:scaleX(0.977)">Code unique</span></div>
<div class="chip" style="left:720px;top:629px;width:211px"><span style="transform:scaleX(0.994)">Numéro d'inventaire du déposant</span></div>
<div class="chip" style="left:942px;top:629px;width:227px"><span style="transform:scaleX(0.968)">Précisions sur le numéro d'inventaire</span></div>
<div class="chip" style="left:1180px;top:629px;width:78px"><span style="transform:scaleX(0.974)">Marquage</span></div>
<div class="chip" style="left:258px;top:666px;width:110px"><span style="transform:scaleX(0.990)">Niveau d'intérêt</span></div>
<div class="chip" style="left:379px;top:666px;width:95px"><span style="transform:scaleX(0.985)">Département</span></div>
<div class="chip" style="left:484px;top:666px;width:101px"><span style="transform:scaleX(0.989)">Nomenclature</span></div>
<div class="chip" style="left:595px;top:666px;width:129px"><span style="transform:scaleX(1.007)">Mode d'acquisition</span></div>
<div class="chip" style="left:734px;top:666px;width:147px"><span style="transform:scaleX(0.991)">Numéro de bordereau</span></div>
<div class="chip" style="left:891px;top:666px;width:116px"><span style="transform:scaleX(1.008)">Nombre d'objets</span></div>
<div class="chip" style="left:1017px;top:666px;width:93px"><span style="transform:scaleX(0.967)">Type de bien</span></div>
<div class="chip" style="left:1120px;top:666px;width:107px"><span style="transform:scaleX(0.992)">Statut juridique</span></div>
<div class="chip" style="left:1237px;top:666px;width:105px"><span style="transform:scaleX(0.961)">Reprise origine</span></div>
<div class="chip" style="left:258px;top:704px;width:142px"><span style="transform:scaleX(0.971)">Nombre d'objets (UE)</span></div>
<div class="chip" style="left:410px;top:704px;width:184px"><span style="transform:scaleX(0.992)">Date d'inscription au registre</span></div>
<div class="chip" style="left:604px;top:704px;width:77px"><span style="transform:scaleX(0.981)">Collection</span></div>
<div class="chip" style="left:691px;top:704px;width:55px"><span style="transform:scaleX(0.941)">Fonds</span></div>
<div class="chip" style="left:756px;top:704px;width:110px"><span style="transform:scaleX(0.970)">Autres numéros</span></div>
<div class="chip" style="left:876px;top:704px;width:103px"><span style="transform:scaleX(0.970)">Numéros expo</span></div>
<div class="chip" style="left:990px;top:704px;width:98px"><span style="transform:scaleX(0.911)">Expo associée</span></div>
<div class="chip" style="left:258px;top:810px;width:74px"><span style="transform:scaleX(0.953)">Discipline</span></div>
<div class="chip" style="left:343px;top:810px;width:75px"><span style="transform:scaleX(0.958)">Catégorie</span></div>
<div class="chip" style="left:428px;top:810px;width:46px"><span style="transform:scaleX(0.980)">Titre</span></div>
<div class="chip" style="left:484px;top:810px;width:108px"><span style="transform:scaleX(1.012)">Qualificatif titre</span></div>
<div class="chip" style="left:602px;top:810px;width:78px"><span style="transform:scaleX(1.012)">Autre titre</span></div>
<div class="chip" style="left:690px;top:810px;width:116px"><span style="transform:scaleX(1.009)">Titre pour portail</span></div>
<div class="chip" style="left:816px;top:810px;width:200px"><span style="transform:scaleX(0.989)">Intitulé de l'ensemble complexe</span></div>
<div class="chip" style="left:1026px;top:810px;width:228px"><span style="transform:scaleX(0.958)">Ensemble complexe : sous-inventaire</span></div>

</body></html>
